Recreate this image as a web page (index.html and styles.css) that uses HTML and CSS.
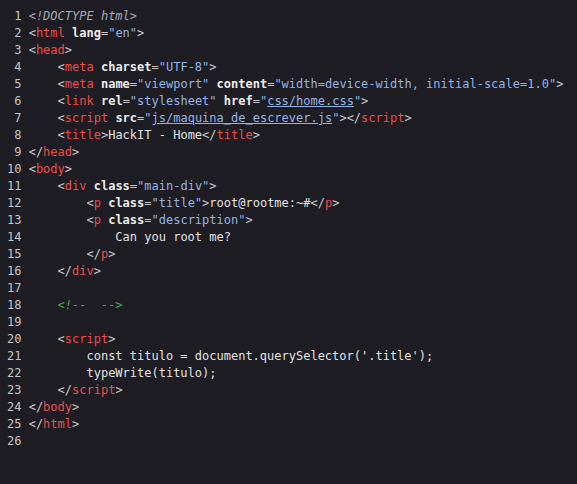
FILE: index.html
```html
<!DOCTYPE html>
<html lang="en">
<head>
<meta charset="UTF-8">
<link rel="stylesheet" href="styles.css">
<title>code</title>
</head>
<body>
<div class="editor">
<div class="line"><span class="ln">1</span><span class="code"><span class="doc">&lt;!DOCTYPE html&gt;</span></span></div>
<div class="line"><span class="ln">2</span><span class="code"><span class="p">&lt;</span><span class="t">html</span> <span class="a">lang</span><span class="p">=</span><span class="s">"en"</span><span class="p">&gt;</span></span></div>
<div class="line"><span class="ln">3</span><span class="code"><span class="p">&lt;</span><span class="t">head</span><span class="p">&gt;</span></span></div>
<div class="line"><span class="ln">4</span><span class="code">    <span class="p">&lt;</span><span class="t">meta</span> <span class="a">charset</span><span class="p">=</span><span class="s">"UTF-8"</span><span class="p">&gt;</span></span></div>
<div class="line"><span class="ln">5</span><span class="code">    <span class="p">&lt;</span><span class="t">meta</span> <span class="a">name</span><span class="p">=</span><span class="s">"viewport"</span> <span class="a">content</span><span class="p">=</span><span class="s">"width=device-width, initial-scale=1.0"</span><span class="p">&gt;</span></span></div>
<div class="line"><span class="ln">6</span><span class="code">    <span class="p">&lt;</span><span class="t">link</span> <span class="a">rel</span><span class="p">=</span><span class="s">"stylesheet"</span> <span class="a">href</span><span class="p">=</span><span class="s">"<span class="u">css/home.css</span>"</span><span class="p">&gt;</span></span></div>
<div class="line"><span class="ln">7</span><span class="code">    <span class="p">&lt;</span><span class="t">script</span> <span class="a">src</span><span class="p">=</span><span class="s">"<span class="u">js/maquina_de_escrever.js</span>"</span><span class="p">&gt;&lt;/</span><span class="t">script</span><span class="p">&gt;</span></span></div>
<div class="line"><span class="ln">8</span><span class="code">    <span class="p">&lt;</span><span class="t">title</span><span class="p">&gt;</span><span class="x">HackIT - Home</span><span class="p">&lt;/</span><span class="t">title</span><span class="p">&gt;</span></span></div>
<div class="line"><span class="ln">9</span><span class="code"><span class="p">&lt;/</span><span class="t">head</span><span class="p">&gt;</span></span></div>
<div class="line"><span class="ln">10</span><span class="code"><span class="p">&lt;</span><span class="t">body</span><span class="p">&gt;</span></span></div>
<div class="line"><span class="ln">11</span><span class="code">    <span class="p">&lt;</span><span class="t">div</span> <span class="a">class</span><span class="p">=</span><span class="s">"main-div"</span><span class="p">&gt;</span></span></div>
<div class="line"><span class="ln">12</span><span class="code">        <span class="p">&lt;</span><span class="t">p</span> <span class="a">class</span><span class="p">=</span><span class="s">"title"</span><span class="p">&gt;</span><span class="x">root@rootme:~#</span><span class="p">&lt;/</span><span class="t">p</span><span class="p">&gt;</span></span></div>
<div class="line"><span class="ln">13</span><span class="code">        <span class="p">&lt;</span><span class="t">p</span> <span class="a">class</span><span class="p">=</span><span class="s">"description"</span><span class="p">&gt;</span></span></div>
<div class="line"><span class="ln">14</span><span class="code">            <span class="x">Can you root me?</span></span></div>
<div class="line"><span class="ln">15</span><span class="code">        <span class="p">&lt;/</span><span class="t">p</span><span class="p">&gt;</span></span></div>
<div class="line"><span class="ln">16</span><span class="code">    <span class="p">&lt;/</span><span class="t">div</span><span class="p">&gt;</span></span></div>
<div class="line"><span class="ln">17</span><span class="code"> </span></div>
<div class="line"><span class="ln">18</span><span class="code">    <span class="c">&lt;!--  --&gt;</span></span></div>
<div class="line"><span class="ln">19</span><span class="code"> </span></div>
<div class="line"><span class="ln">20</span><span class="code">    <span class="p">&lt;</span><span class="t">script</span><span class="p">&gt;</span></span></div>
<div class="line"><span class="ln">21</span><span class="code">        <span class="x">const titulo = document.querySelector('.title');</span></span></div>
<div class="line"><span class="ln">22</span><span class="code">        <span class="x">typeWrite(titulo);</span></span></div>
<div class="line"><span class="ln">23</span><span class="code">    <span class="p">&lt;/</span><span class="t">script</span><span class="p">&gt;</span></span></div>
<div class="line"><span class="ln">24</span><span class="code"><span class="p">&lt;/</span><span class="t">body</span><span class="p">&gt;</span></span></div>
<div class="line"><span class="ln">25</span><span class="code"><span class="p">&lt;/</span><span class="t">html</span><span class="p">&gt;</span></span></div>
<div class="line"><span class="ln">26</span><span class="code"> </span></div>
</div>
</body>
</html>
```
FILE: styles.css
```css
html, body {
  margin: 0;
  padding: 0;
  background: #1d1d23;
  height: 100%;
}
.editor {
  padding: 8px 0 0 7px;
  font-family: "DejaVu Sans Mono", monospace;
  font-size: 12px;
  line-height: 17px;
  color: #d8d8d8;
}
.line {
  display: flex;
  white-space: pre;
}
.ln {
  width: 2ch;
  text-align: right;
  margin-right: 1ch;
  color: #c4c4c4;
  flex: none;
}
.code {
  white-space: pre;
}
.p { color: #c8c8cc; }
.t { color: #ec4d4d; }
.a { color: #ececec; font-weight: bold; }
.s { color: #94b3e6; }
.u { text-decoration: underline; }
.x { color: #e2e2e2; }
.doc { color: #a8a8b0; font-style: italic; }
.c { color: #4aa84f; font-style: italic; }
```
